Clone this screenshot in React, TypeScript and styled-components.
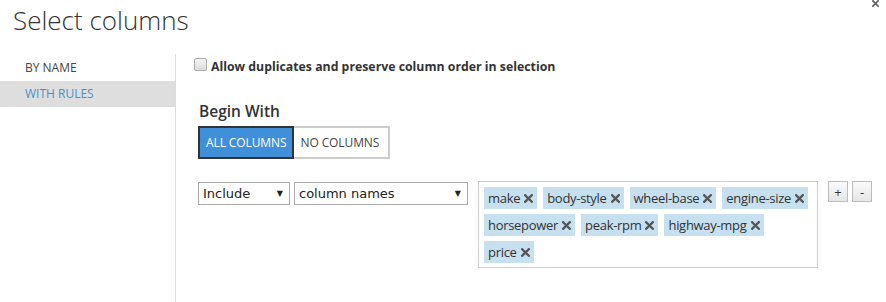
import styled, { createGlobalStyle } from "styled-components";

const GlobalStyle = createGlobalStyle`
  body {
    margin: 0;
    background: #fff;
    font-family: "Open Sans", "Noto Sans", sans-serif;
    color: #333;
  }
`;

const Dialog = styled.div`
  position: relative;
  width: 886px;
  height: 302px;
  overflow: hidden;
  background: #fff;
`;

const Close = styled.span`
  position: absolute;
  top: 0;
  right: 7px;
  display: flex;
  color: #555;
`;

const Title = styled.h1`
  margin: 0;
  height: 54px;
  padding-left: 13px;
  font-size: 26px;
  font-weight: 300;
  line-height: 40px;
  color: #333;
`;

const Body = styled.div`
  display: flex;
  height: 248px;
`;

const Side = styled.nav`
  width: 175px;
  padding-top: 1px;
  border-right: 1px solid #dcdcdc;
`;

const NavItem = styled.div<{ $active?: boolean }>`
  height: 26px;
  line-height: 26px;
  padding-left: 25px;
  font-size: 12px;
  text-transform: uppercase;
  color: ${(p) => (p.$active ? "#4a8fcc" : "#444")};
  background: ${(p) => (p.$active ? "#dedede" : "transparent")};
`;

const Main = styled.div`
  flex: 1;
  padding-left: 18px;
  padding-top: 4px;
`;

const CheckRow = styled.label`
  display: flex;
  align-items: center;
  gap: 4px;
  font-size: 12.3px;
  font-weight: 700;
  color: #333;
  height: 16px;
`;

const Box = styled.span`
  width: 11px;
  height: 11px;
  margin-top: -3px;
  border: 1px solid #aaa;
  border-radius: 2px;
  background: linear-gradient(#f4f4f4, #dcdcdc);
`;

const Heading = styled.div`
  margin-top: 26px;
  padding-left: 5px;
  font-size: 15.5px;
  font-weight: 600;
  color: #333;
  line-height: 22px;
`;

const Toggle = styled.div`
  display: flex;
  margin-top: 4px;
  margin-left: 4px;
`;

const ToggleButton = styled.div<{ $on?: boolean }>`
  box-sizing: border-box;
  height: 33px;
  padding: 0 ${(p) => (p.$on ? 6 : 9)}px 0 6px;
  display: flex;
  align-items: center;
  font-size: 12px;
  text-transform: uppercase;
  letter-spacing: -0.1px;
  color: ${(p) => (p.$on ? "#fff" : "#444")};
  background: ${(p) => (p.$on ? "#3f8fd9" : "#fff")};
  border: 2px solid ${(p) => (p.$on ? "#333" : "#ccc")};
  ${(p) => (p.$on ? "" : "border-left: none;")}
`;

const RuleRow = styled.div`
  display: flex;
  align-items: flex-start;
  margin-top: 22px;
  margin-left: 4px;
`;

const Select = styled.div<{ $w: number }>`
  box-sizing: border-box;
  width: ${(p) => p.$w}px;
  height: 23px;
  margin-right: 4px;
  margin-top: 1px;
  padding: 0 6px 0 4px;
  border: 1px solid #a9a9a9;
  display: flex;
  align-items: center;
  justify-content: space-between;
  font-family: "DejaVu Sans", Verdana, sans-serif;
  font-size: 13px;
  color: #222;
  span:last-child {
    font-size: 8px;
  }
`;

const TagBox = styled.div`
  box-sizing: border-box;
  width: 340px;
  height: 87px;
  margin-left: 6px;
  padding: 5px;
  border: 1px solid #ccc;
  display: flex;
  flex-wrap: wrap;
  align-content: flex-start;
  gap: 5px 6px;
`;

const Tag = styled.span`
  height: 22px;
  padding: 0 4px;
  display: flex;
  align-items: center;
  gap: 4px;
  background: #c7e0ef;
  font-size: 13px;
  letter-spacing: -0.3px;
  color: #333;
`;

const SmallButton = styled.div`
  box-sizing: border-box;
  width: 20px;
  height: 21px;
  margin-left: 10px;
  border: 1px solid #bbb;
  background: linear-gradient(#fafafa, #e6e6e6);
  display: flex;
  align-items: center;
  justify-content: center;
  font-size: 13px;
  color: #333;
  & + & {
    margin-left: 4px;
  }
`;

const Cross = ({ size = 9, color = "#555" }: { size?: number; color?: string }) => (
  <svg width={size} height={size} viewBox="0 0 9 9">
    <path d="M1.2 1.2 L7.8 7.8 M7.8 1.2 L1.2 7.8" stroke={color} strokeWidth="2.3" strokeLinecap="square" />
  </svg>
);

const tags = [
  "make",
  "body-style",
  "wheel-base",
  "engine-size",
  "horsepower",
  "peak-rpm",
  "highway-mpg",
  "price",
];

export default function App() {
  return (
    <Dialog>
      <GlobalStyle />
      <Close>
        <Cross size={7} color="#666" />
      </Close>
      <Title>Select columns</Title>
      <Body>
        <Side>
          <NavItem>By name</NavItem>
          <NavItem $active>With rules</NavItem>
        </Side>
        <Main>
          <CheckRow>
            <Box />
            Allow duplicates and preserve column order in selection
          </CheckRow>
          <Heading>Begin With</Heading>
          <Toggle>
            <ToggleButton $on>All columns</ToggleButton>
            <ToggleButton>No columns</ToggleButton>
          </Toggle>
          <RuleRow>
            <Select $w={92}>
              <span>Include</span>
              <span>▼</span>
            </Select>
            <Select $w={174}>
              <span>column names</span>
              <span>▼</span>
            </Select>
            <TagBox>
              {tags.map((t) => (
                <Tag key={t}>
                  {t}
                  <Cross />
                </Tag>
              ))}
            </TagBox>
            <SmallButton>+</SmallButton>
            <SmallButton>-</SmallButton>
          </RuleRow>
        </Main>
      </Body>
    </Dialog>
  );
}
